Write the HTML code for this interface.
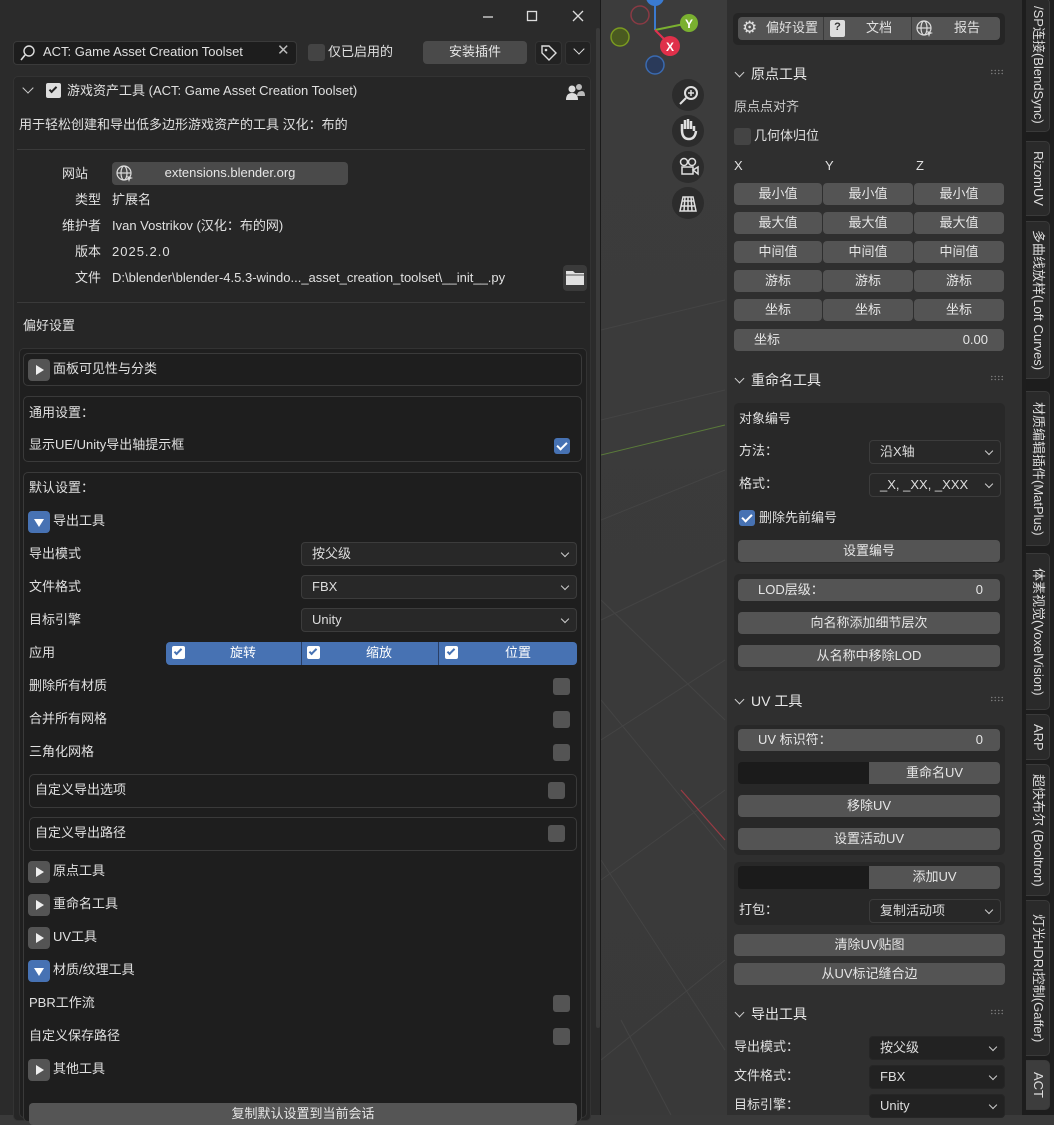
<!DOCTYPE html>
<html><head><meta charset="utf-8">
<style>
*{box-sizing:border-box;margin:0;padding:0}
body{width:1054px;height:1115px;overflow:hidden;background:#3a3a3a;font-family:"Liberation Sans","Noto Sans CJK SC",sans-serif;font-size:13px;color:#e0e0e0;position:relative}
.a{position:absolute;white-space:nowrap}
.t{position:absolute;white-space:nowrap;line-height:16px}
.btn{position:absolute;background:#545454;border-radius:4px;text-align:center;color:#e6e6e6;line-height:22px;height:22px}
.dd{position:absolute;background:#282828;border:1px solid #3c3c3c;border-radius:4px;height:24px;line-height:22px;padding-left:10px;color:#ddd}
.dd:after{content:"";position:absolute;right:8px;top:7px;width:5px;height:5px;border-right:1.5px solid #ccc;border-bottom:1.5px solid #ccc;transform:rotate(45deg)}
.cb{position:absolute;width:17px;height:17px;background:#545454;border-radius:3px}
.cbon{position:absolute;width:16px;height:16px;background:#4772b3;border-radius:3px}
.cbon:after{content:"";position:absolute;left:5px;top:2px;width:4px;height:8px;border-right:2px solid #fff;border-bottom:2px solid #fff;transform:rotate(45deg)}
.box{position:absolute;border:1px solid #3a3a3a;border-radius:5px;background:#1e1e1e}
.tri{position:absolute;width:22px;height:22px;background:#545454;border-radius:4px}
.tri:after{content:"";position:absolute;left:8px;top:6px;border-left:8px solid #eee;border-top:5px solid transparent;border-bottom:5px solid transparent}
.trid{position:absolute;width:22px;height:22px;background:#4772b3;border-radius:4px}
.trid:after{content:"";position:absolute;left:6px;top:8px;border-top:8px solid #fff;border-left:5px solid transparent;border-right:5px solid transparent}
.sub{position:absolute;background:#282828;border-radius:5px}
.hdr{position:absolute;font-size:14px;color:#e6e6e6}
.chev{display:inline-block;width:7px;height:7px;border-right:1.5px solid #ccc;border-bottom:1.5px solid #ccc;transform:rotate(45deg);margin:0 8px 3px 3px}
.grip{position:absolute;width:14px;height:6px;background-image:radial-gradient(#777 0.8px,transparent 1px);background-size:3.5px 3px}
.tab{position:absolute;left:1026px;width:24px;background:#2a2a2a;border-radius:0 5px 5px 0;border:1px solid #3a3a3a;border-left:none;writing-mode:vertical-rl;text-orientation:sideways;font-size:13px;line-height:22px;text-align:center;color:#ddd;overflow:hidden}
</style></head><body>

<!-- viewport -->
<div class="a" style="left:601px;top:0;width:453px;height:1115px;background:linear-gradient(180deg,#3c3c3c,#393939)"></div>
<svg class="a" style="left:601px;top:0" width="430" height="1115">
<g stroke="#444" stroke-width="1" fill="none">
<line x1="0" y1="330" x2="124" y2="300"/><line x1="0" y1="420" x2="124" y2="390"/><line x1="0" y1="520" x2="124" y2="470"/><line x1="0" y1="620" x2="124" y2="560"/><line x1="0" y1="740" x2="124" y2="660"/><line x1="0" y1="880" x2="124" y2="790"/><line x1="0" y1="1060" x2="124" y2="960"/>
<line x1="0" y1="600" x2="124" y2="720"/><line x1="0" y1="700" x2="124" y2="850"/><line x1="0" y1="860" x2="124" y2="1050"/><line x1="20" y1="1020" x2="70" y2="1115"/>
</g>
<line x1="0" y1="455" x2="124" y2="425" stroke="#5a7a3a" stroke-width="1"/>
<line x1="80" y1="790" x2="124" y2="840" stroke="#9a3a44" stroke-width="1.2"/>
<line x1="54" y1="0" x2="54" y2="30" stroke="#3a7ad0" stroke-width="2"/>
<line x1="54" y1="30" x2="88" y2="23" stroke="#7ab030" stroke-width="2"/>
<line x1="54" y1="30" x2="69" y2="45" stroke="#e03050" stroke-width="2"/>
<circle cx="39" cy="15" r="9" fill="none" stroke="#8a3a44" stroke-width="1.5"/>
<circle cx="19" cy="37" r="9" fill="#4a5a20" stroke="#7a9a20" stroke-width="1.5"/>
<circle cx="54" cy="65" r="9" fill="#2a3a5a" stroke="#3a6ab0" stroke-width="1.5"/>
<circle cx="54" cy="-3" r="9" fill="#3a7ad0"/>
<circle cx="88" cy="23" r="9" fill="#7ab030"/><text x="84" y="28" font-size="12" fill="#fff" font-family="Liberation Sans" font-weight="bold">Y</text>
<circle cx="69" cy="46" r="10" fill="#e0304a"/><text x="65" y="51" font-size="12" fill="#fff" font-family="Liberation Sans" font-weight="bold">X</text>
<g fill="#2c2c2c"><circle cx="87" cy="95" r="16"/><circle cx="87" cy="131" r="16"/><circle cx="87" cy="167" r="16"/><circle cx="87" cy="203" r="16"/></g>
<g stroke="#e0e0e0" stroke-width="2" fill="none">
<circle cx="90" cy="93" r="6"/><line x1="85" y1="98" x2="79" y2="104"/><line x1="90" y1="90" x2="90" y2="96" stroke-width="1.5"/><line x1="87" y1="93" x2="93" y2="93" stroke-width="1.5"/>
<path d="M81 131 v-7 M84 129 v-9 M87 129 v-10 M90 129 v-8 M93 131 v-5 M81 130 q0 9 7 9 q6 0 7 -8" stroke-width="2.5"/>
<circle cx="83" cy="162" r="3.5" stroke-width="1.5"/><circle cx="91" cy="162" r="3.5" stroke-width="1.5"/><rect x="81" y="167" width="11" height="7" stroke-width="1.5"/><path d="M92 170 l5 -3 v7 z" stroke-width="1.5"/>
<path d="M79 211 l3 -14 h10 l3 14 z M80 206 h14 M81 201 h12 M84 197 l-1 14 M87 197 v14 M90 197 l1 14" stroke-width="1.5"/>
</g>
</svg>

<!-- left window -->
<div class="a" style="left:0;top:0;width:601px;height:1115px;background:#2b2b2b;border-right:1px solid #1a1a1a"></div>
<svg class="a" style="left:470px;top:6px" width="120" height="22"><g stroke="#ddd" stroke-width="1.3" fill="none"><line x1="13" y1="11" x2="23" y2="11"/><rect x="57.5" y="5.5" width="9" height="9"/><path d="M103 5 l10 10 M113 5 l-10 10"/></g></svg>
<div class="a" style="left:596px;top:28px;width:4px;height:1000px;background:#3a3a3a;border-radius:2px"></div>

<div class="a" style="left:13px;top:41px;width:284px;height:24px;background:#1d1d1d;border:1px solid #3a3a3a;border-radius:4px"></div>
<svg class="a" style="left:18px;top:44px" width="20" height="18"><circle cx="11" cy="7" r="5" stroke="#ddd" stroke-width="1.4" fill="none"/><line x1="7" y1="11" x2="3" y2="16" stroke="#ddd" stroke-width="1.6"/></svg>
<div class="t" style="left:43px;top:44px">ACT: Game Asset Creation Toolset</div>
<div class="t" style="left:277px;top:43px;font-size:15px;color:#bbb">✕</div>
<div class="cb" style="left:308px;top:44px;background:#444"></div>
<div class="t" style="left:328px;top:44px">仅已启用的</div>
<div class="btn" style="left:423px;top:41px;width:104px;height:23px;background:#4a4a4a">安装插件</div>
<div class="a" style="left:535px;top:41px;width:27px;height:24px;background:#222;border-radius:4px;border:1px solid #333"></div>
<svg class="a" style="left:539px;top:44px" width="20" height="18"><path d="M3 2 h7 l7 7 l-7 7 l-7 -7 z" stroke="#ddd" stroke-width="1.4" fill="none"/><circle cx="7" cy="6" r="1.3" fill="#ddd"/></svg>
<div class="a" style="left:565px;top:41px;width:26px;height:24px;background:#222;border-radius:4px;border:1px solid #333"></div>
<div class="a" style="left:575px;top:45px;width:8px;height:8px;border-right:1.5px solid #ddd;border-bottom:1.5px solid #ddd;transform:rotate(45deg)"></div>

<div class="a" style="left:13px;top:76px;width:578px;height:1045px;background:#262626;border:1px solid #333;border-radius:5px"></div>
<div class="a" style="left:24px;top:84px;width:8px;height:8px;border-right:1.5px solid #ccc;border-bottom:1.5px solid #ccc;transform:rotate(45deg)"></div>
<div class="a" style="left:46px;top:83px;width:15px;height:15px;background:#ddd;border-radius:2px"></div>
<div class="a" style="left:51px;top:85px;width:4px;height:8px;border-right:2px solid #222;border-bottom:2px solid #222;transform:rotate(45deg)"></div>
<div class="t" style="left:67px;top:83px">游戏资产工具 (ACT: Game Asset Creation Toolset)</div>
<svg class="a" style="left:564px;top:82px" width="22" height="20"><circle cx="8" cy="7" r="3.5" fill="#ddd"/><path d="M2 18 q0 -7 6 -7 q6 0 6 7 z" fill="#ddd"/><circle cx="15" cy="5" r="3" fill="#bbb"/><path d="M13 14 q0 -5 5 -5 q3 0 3 5 z" fill="#bbb"/></svg>
<div class="t" style="left:19px;top:117px">用于轻松创建和导出低多边形游戏资产的工具 汉化：布的</div>
<div class="a" style="left:17px;top:149px;width:568px;height:1px;background:#3a3a3a"></div>
<div class="t" style="left:62px;top:166px">网站</div>
<div class="btn" style="left:112px;top:162px;width:236px;height:23px;background:#4a4a4a">extensions.blender.org</div>
<svg class="a" style="left:115px;top:164px" width="20" height="20"><g stroke="#ddd" stroke-width="1.2" fill="none"><circle cx="9" cy="9" r="7"/><ellipse cx="9" cy="9" rx="3" ry="7"/><line x1="2" y1="9" x2="16" y2="9"/></g><path d="M12 12 l6 2 l-3 1 l-1 3 z" fill="#ddd"/></svg>
<div class="t" style="left:75px;top:192px">类型</div><div class="t" style="left:112px;top:192px">扩展名</div>
<div class="t" style="left:62px;top:218px">维护者</div><div class="t" style="left:112px;top:218px">Ivan Vostrikov (汉化：布的网)</div>
<div class="t" style="left:75px;top:244px">版本</div><div class="t" style="left:112px;top:244px;letter-spacing:1px">2025.2.0</div>
<div class="t" style="left:75px;top:270px">文件</div><div class="t" style="left:112px;top:270px">D:\blender\blender-4.5.3-windo..._asset_creation_toolset\__init__.py</div>
<div class="a" style="left:563px;top:265px;width:24px;height:26px;background:#3a3a3a;border-radius:4px"></div>
<svg class="a" style="left:565px;top:269px" width="20" height="18"><path d="M1 2 h7 l2 2 h9 v12 h-18 z" fill="#e0e0e0"/><line x1="1" y1="6" x2="19" y2="6" stroke="#555"/></svg>
<div class="a" style="left:17px;top:302px;width:568px;height:1px;background:#3a3a3a"></div>
<div class="t" style="left:23px;top:318px">偏好设置</div>

<div class="a" style="left:19px;top:348px;width:568px;height:770px;background:#1f1f1f;border:1px solid #333;border-radius:5px"></div>
<div class="box" style="left:23px;top:353px;width:559px;height:33px"></div>
<div class="tri" style="left:28px;top:359px"></div><div class="t" style="left:53px;top:361px">面板可见性与分类</div>
<div class="box" style="left:23px;top:396px;width:559px;height:66px"></div>
<div class="t" style="left:29px;top:405px">通用设置：</div>
<div class="t" style="left:29px;top:437px">显示UE/Unity导出轴提示框</div>
<div class="cbon" style="left:554px;top:438px"></div>
<div class="box" style="left:23px;top:472px;width:559px;height:650px"></div>
<div class="t" style="left:29px;top:480px">默认设置：</div>
<div class="trid" style="left:28px;top:511px"></div><div class="t" style="left:53px;top:513px">导出工具</div>
<div class="t" style="left:29px;top:546px">导出模式</div><div class="dd" style="left:301px;top:542px;width:276px">按父级</div>
<div class="t" style="left:29px;top:579px">文件格式</div><div class="dd" style="left:301px;top:575px;width:276px">FBX</div>
<div class="t" style="left:29px;top:612px">目标引擎</div><div class="dd" style="left:301px;top:608px;width:276px">Unity</div>
<div class="t" style="left:29px;top:645px">应用</div>
<div class="a" style="left:166px;top:642px;width:411px;height:23px;background:#4772b3;border-radius:4px"></div>
<div class="a" style="left:301px;top:642px;width:1px;height:23px;background:#2a3f66"></div>
<div class="a" style="left:438px;top:642px;width:1px;height:23px;background:#2a3f66"></div>
<div class="a" style="left:172px;top:646px;width:13px;height:13px;background:#fff;border-radius:2px"></div><div class="a" style="left:176px;top:647px;width:4px;height:8px;border-right:2px solid #4772b3;border-bottom:2px solid #4772b3;transform:rotate(45deg)"></div>
<div class="a" style="left:307px;top:646px;width:13px;height:13px;background:#fff;border-radius:2px"></div><div class="a" style="left:311px;top:647px;width:4px;height:8px;border-right:2px solid #4772b3;border-bottom:2px solid #4772b3;transform:rotate(45deg)"></div>
<div class="a" style="left:445px;top:646px;width:13px;height:13px;background:#fff;border-radius:2px"></div><div class="a" style="left:449px;top:647px;width:4px;height:8px;border-right:2px solid #4772b3;border-bottom:2px solid #4772b3;transform:rotate(45deg)"></div>
<div class="t" style="left:230px;top:645px;color:#fff">旋转</div><div class="t" style="left:366px;top:645px;color:#fff">缩放</div><div class="t" style="left:505px;top:645px;color:#fff">位置</div>
<div class="t" style="left:29px;top:678px">删除所有材质</div><div class="cb" style="left:553px;top:678px"></div>
<div class="t" style="left:29px;top:711px">合并所有网格</div><div class="cb" style="left:553px;top:711px"></div>
<div class="t" style="left:29px;top:744px">三角化网格</div><div class="cb" style="left:553px;top:744px"></div>
<div class="box" style="left:29px;top:774px;width:548px;height:34px"></div>
<div class="t" style="left:35px;top:782px">自定义导出选项</div><div class="cb" style="left:548px;top:782px"></div>
<div class="box" style="left:29px;top:817px;width:548px;height:34px"></div>
<div class="t" style="left:35px;top:825px">自定义导出路径</div><div class="cb" style="left:548px;top:825px"></div>
<div class="tri" style="left:28px;top:861px"></div><div class="t" style="left:53px;top:863px">原点工具</div>
<div class="tri" style="left:28px;top:894px"></div><div class="t" style="left:53px;top:896px">重命名工具</div>
<div class="tri" style="left:28px;top:927px"></div><div class="t" style="left:53px;top:929px">UV工具</div>
<div class="trid" style="left:28px;top:960px"></div><div class="t" style="left:53px;top:962px">材质/纹理工具</div>
<div class="t" style="left:29px;top:995px">PBR工作流</div><div class="cb" style="left:553px;top:995px"></div>
<div class="t" style="left:29px;top:1028px">自定义保存路径</div><div class="cb" style="left:553px;top:1028px"></div>
<div class="tri" style="left:28px;top:1059px"></div><div class="t" style="left:53px;top:1061px">其他工具</div>
<div class="btn" style="left:29px;top:1103px;width:548px;background:#555">复制默认设置到当前会话</div>

<!-- sidebar -->
<div class="a" style="left:727px;top:0;width:295px;height:1115px;background:#2f2f2f"></div>
<div class="a" style="left:733px;top:13px;width:272px;height:32px;background:#252525;border-radius:5px"></div>
<div class="btn" style="left:738px;top:17px;width:262px;height:23px"></div>
<div class="a" style="left:823px;top:17px;width:1px;height:23px;background:#3a3a3a"></div><div class="a" style="left:911px;top:17px;width:1px;height:23px;background:#3a3a3a"></div>
<div class="t" style="left:742px;top:20px;font-size:17px">⚙</div><div class="t" style="left:766px;top:20px">偏好设置</div>
<div class="a" style="left:830px;top:20px;width:15px;height:17px;background:#ddd;border-radius:2px;color:#333;font-size:11px;text-align:center;line-height:14px;font-weight:bold">?</div>
<div class="t" style="left:866px;top:20px">文档</div>
<svg class="a" style="left:915px;top:19px" width="20" height="20"><g stroke="#ddd" stroke-width="1.2" fill="none"><circle cx="9" cy="9" r="7"/><ellipse cx="9" cy="9" rx="3" ry="7"/><line x1="2" y1="9" x2="16" y2="9"/></g><path d="M12 12 l6 2 l-3 1 l-1 3 z" fill="#ddd"/></svg>
<div class="t" style="left:954px;top:20px">报告</div>

<div class="hdr" style="left:733px;top:64px"><span class="chev"></span>原点工具</div><div class="grip" style="left:990px;top:69px"></div>
<div class="t" style="left:734px;top:99px;color:#ccc">原点点对齐</div>
<div class="cb" style="left:734px;top:128px;background:#444"></div><div class="t" style="left:754px;top:128px">几何体归位</div>
<div class="t" style="left:734px;top:158px">X</div><div class="t" style="left:825px;top:158px">Y</div><div class="t" style="left:916px;top:158px">Z</div>
<div class="a" style="left:734px;top:183px;width:270px;height:138px">
<div class="btn" style="left:0;top:0;width:88px">最小值</div><div class="btn" style="left:89px;top:0;width:90px">最小值</div><div class="btn" style="left:180px;top:0;width:90px">最小值</div>
<div class="btn" style="left:0;top:29px;width:88px">最大值</div><div class="btn" style="left:89px;top:29px;width:90px">最大值</div><div class="btn" style="left:180px;top:29px;width:90px">最大值</div>
<div class="btn" style="left:0;top:58px;width:88px">中间值</div><div class="btn" style="left:89px;top:58px;width:90px">中间值</div><div class="btn" style="left:180px;top:58px;width:90px">中间值</div>
<div class="btn" style="left:0;top:87px;width:88px">游标</div><div class="btn" style="left:89px;top:87px;width:90px">游标</div><div class="btn" style="left:180px;top:87px;width:90px">游标</div>
<div class="btn" style="left:0;top:116px;width:88px">坐标</div><div class="btn" style="left:89px;top:116px;width:90px">坐标</div><div class="btn" style="left:180px;top:116px;width:90px">坐标</div>
</div>
<div class="btn" style="left:734px;top:329px;width:270px;text-align:left;padding-left:20px">坐标<span style="position:absolute;right:16px">0.00</span></div>

<div class="hdr" style="left:733px;top:370px"><span class="chev"></span>重命名工具</div><div class="grip" style="left:990px;top:375px"></div>
<div class="sub" style="left:734px;top:403px;width:271px;height:160px"></div>
<div class="t" style="left:739px;top:411px">对象编号</div>
<div class="t" style="left:739px;top:443px">方法：</div><div class="dd" style="left:869px;top:440px;width:132px">沿X轴</div>
<div class="t" style="left:739px;top:476px">格式：</div><div class="dd" style="left:869px;top:473px;width:132px">_X, _XX, _XXX</div>
<div class="cbon" style="left:739px;top:510px"></div><div class="t" style="left:759px;top:510px">删除先前编号</div>
<div class="btn" style="left:738px;top:540px;width:262px">设置编号</div>
<div class="sub" style="left:734px;top:574px;width:271px;height:97px"></div>
<div class="btn" style="left:738px;top:579px;width:262px;text-align:left;padding-left:20px">LOD层级：<span style="position:absolute;right:17px">0</span></div>
<div class="btn" style="left:738px;top:612px;width:262px">向名称添加细节层次</div>
<div class="btn" style="left:738px;top:645px;width:262px">从名称中移除LOD</div>

<div class="hdr" style="left:733px;top:691px"><span class="chev"></span>UV 工具</div><div class="grip" style="left:990px;top:696px"></div>
<div class="sub" style="left:734px;top:725px;width:271px;height:130px"></div>
<div class="btn" style="left:738px;top:729px;width:262px;text-align:left;padding-left:20px">UV 标识符：<span style="position:absolute;right:17px">0</span></div>
<div class="a" style="left:738px;top:762px;width:131px;height:22px;background:#1b1b1b;border-radius:4px 0 0 4px"></div>
<div class="btn" style="left:869px;top:762px;width:131px;border-radius:0 4px 4px 0">重命名UV</div>
<div class="btn" style="left:738px;top:795px;width:262px">移除UV</div>
<div class="btn" style="left:738px;top:828px;width:262px">设置活动UV</div>
<div class="sub" style="left:734px;top:862px;width:271px;height:63px"></div>
<div class="a" style="left:738px;top:866px;width:131px;height:23px;background:#1b1b1b;border-radius:4px 0 0 4px"></div>
<div class="btn" style="left:869px;top:866px;width:131px;height:23px;border-radius:0 4px 4px 0">添加UV</div>
<div class="t" style="left:739px;top:902px">打包：</div><div class="dd" style="left:869px;top:899px;width:132px">复制活动项</div>
<div class="btn" style="left:734px;top:934px;width:271px">清除UV贴图</div>
<div class="btn" style="left:734px;top:963px;width:271px">从UV标记缝合边</div>

<div class="hdr" style="left:733px;top:1004px"><span class="chev"></span>导出工具</div><div class="grip" style="left:990px;top:1009px"></div>
<div class="t" style="left:734px;top:1039px">导出模式：</div><div class="dd" style="left:869px;top:1036px;width:136px;background:#222;border-color:#262626">按父级</div>
<div class="t" style="left:734px;top:1068px">文件格式：</div><div class="dd" style="left:869px;top:1065px;width:136px;background:#222;border-color:#262626">FBX</div>
<div class="t" style="left:734px;top:1097px">目标引擎：</div><div class="dd" style="left:869px;top:1094px;width:136px;background:#222;border-color:#262626">Unity</div>

<!-- tabs -->
<div class="a" style="left:1022px;top:0;width:32px;height:1115px;background:#1d1d1d"></div>
<div class="tab" style="top:-2px;height:134px">/SP连接(BlendSync)</div>
<div class="tab" style="top:141px;height:75px">RizomUV</div>
<div class="tab" style="top:221px;height:158px">多曲线放样(Loft Curves)</div>
<div class="tab" style="top:391px;height:155px">材质编辑插件(MatPlus)</div>
<div class="tab" style="top:553px;height:157px">体素视觉(VoxelVision)</div>
<div class="tab" style="top:714px;height:46px">ARP</div>
<div class="tab" style="top:764px;height:132px">超快布尔 (Booltron)</div>
<div class="tab" style="top:900px;height:156px">灯光HDRI控制(Gaffer)</div>
<div class="tab" style="top:1060px;height:50px;background:#3d3d3d">ACT</div>
</body></html>
